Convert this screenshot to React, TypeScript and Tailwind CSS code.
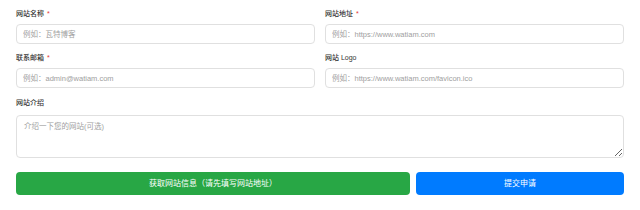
import React from "react";

const font = { fontFamily: '"Liberation Sans", "Noto Sans CJK SC", sans-serif' };

function Field({ label, required, placeholder }: { label: string; required?: boolean; placeholder: string }) {
  return (
    <div className="flex flex-col">
      <label className="text-[7px] leading-[8px] font-medium text-[#333] mb-[6px]">
        {label}
        {required && <span className="text-[#e53935] ml-[3px]">*</span>}
      </label>
      <input
        className="h-[20px] w-full rounded-[4px] border border-[#e0e0e0] px-[6px] text-[7.5px] text-[#333] placeholder:text-[#a0a0a0] outline-none bg-white"
        placeholder={placeholder}
      />
    </div>
  );
}

export default function App() {
  return (
    <div className="w-[640px] h-[210px] bg-white px-4 pt-[10px]" style={font}>
      <div className="grid grid-cols-2 gap-x-[10px] gap-y-[10px]">
        <Field label="网站名称" required placeholder="例如：瓦特博客" />
        <Field label="网站地址" required placeholder="例如：https://www.watiam.com" />
        <Field label="联系邮箱" required placeholder="例如：admin@watiam.com" />
        <Field label="网站 Logo" placeholder="例如：https://www.watiam.com/favicon.ico" />
      </div>
      <div className="flex flex-col mt-[11px]">
        <label className="text-[7px] leading-[8px] font-medium text-[#333] mb-[8px]">网站介绍</label>
        <textarea
          className="h-[43px] w-full rounded-[4px] border border-[#e0e0e0] px-[7px] py-[6px] text-[7.5px] leading-[10px] text-[#333] placeholder:text-[#a0a0a0] outline-none bg-white"
          placeholder="介绍一下您的网站(可选)"
        />
      </div>
      <div className="flex gap-[6px] mt-[14px]">
        <button className="w-[394px] h-[23px] rounded-[4px] bg-[#28a745] text-white text-[8px]">
          获取网站信息（请先填写网站地址）
        </button>
        <button className="flex-1 h-[23px] rounded-[4px] bg-[#007bff] text-white text-[8px]">
          提交申请
        </button>
      </div>
    </div>
  );
}
